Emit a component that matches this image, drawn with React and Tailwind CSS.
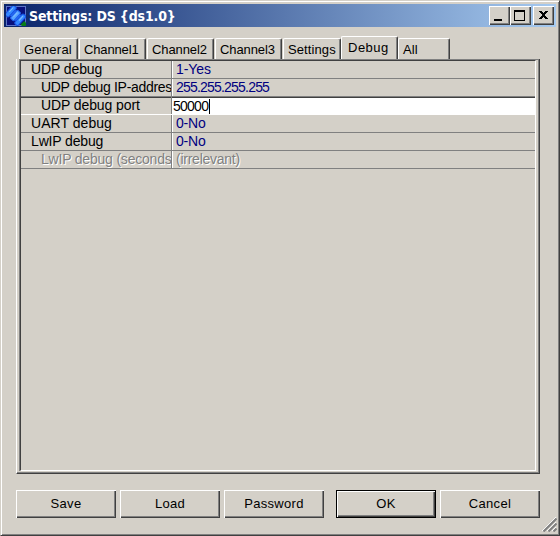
const tabs = [
  { label: "General", cls: "w-[59px] mr-px", ls: "tracking-[0.25px]" },
  { label: "Channel1", cls: "w-[67px] mr-px", ls: "tracking-[-0.15px]" },
  { label: "Channel2", cls: "w-[67px] mr-px", ls: "tracking-[-0.1px]" },
  { label: "Channel3", cls: "w-[67px] mr-px", ls: "tracking-[-0.1px]" },
  { label: "Settings", cls: "w-[58px]", ls: "tracking-[0.1px]" },
  { label: "Debug", cls: "w-[57px]", ls: "tracking-[0.5px]", active: true },
  { label: "All", cls: "w-[52px]", ls: "tracking-[0.1px]" },
];

const rows = [
  { name: "UDP debug", value: "1-Yes", nameLs: "tracking-[-0.1px]", valueLs: "tracking-[-0.1px]" },
  { name: "UDP debug IP-address", value: "255.255.255.255", child: true, nameLs: "tracking-[-0.3px]", valueLs: "tracking-[-0.8px]" },
  { name: "UDP debug port", value: "50000", child: true, editing: true, nameLs: "tracking-[-0.1px]" },
  { name: "UART debug", value: "0-No", nameLs: "tracking-[0.05px]", valueLs: "tracking-[-0.2px]" },
  { name: "LwIP debug", value: "0-No", nameLs: "tracking-[-0.15px]", valueLs: "tracking-[-0.2px]" },
  { name: "LwIP debug (seconds)", value: "(irrelevant)", child: true, disabled: true, nameLs: "tracking-[-0.2px]", valueLs: "tracking-[-0.25px]" },
];

function Tab({ label, cls, ls, active }) {
  return (
    <div
      className={`${cls} ${active ? "h-[23px] pt-[3px] pl-[6px]" : "h-[21px] pt-[3px] pl-[4px]"} ${ls} shrink-0 rounded-t-[2px] border-t border-l border-white border-r border-r-[#404040] shadow-[inset_-1px_0_0_#808080] text-[13px] leading-[15px] whitespace-nowrap`}
    >
      {label}
    </div>
  );
}

function Row({ name, value, child, editing, disabled, nameLs, valueLs }) {
  const line = editing ? "border-white shadow-[inset_0_1px_0_#404040]" : "border-[#808080]";
  const color = disabled
    ? "text-[#808080] [text-shadow:1px_1px_0_#fff]"
    : "text-black";
  return (
    <div
      className={`flex h-[18px] border-b ${line} text-[14px] leading-[16px] whitespace-nowrap`}
    >
      <div
        className={`w-[151px] shrink-0 overflow-hidden border-r border-[#808080] ${child ? "pl-5" : "pl-[10px]"} ${color} ${nameLs}`}
      >
        {name}
      </div>
      {editing ? (
        <div className="mt-px flex flex-1 items-center bg-white pl-px tracking-[-0.75px]">
          {value}
          <span className="ml-[1px] h-[15px] w-px bg-black" />
        </div>
      ) : (
        <div
          className={`flex-1 border-l border-white pl-[3px] ${disabled ? color : "text-[#000080]"} ${valueLs}`}
        >
          {value}
        </div>
      )}
    </div>
  );
}

function Button({ label, primary, className = "" }) {
  const edge = primary
    ? "border border-black pb-px shadow-[inset_1px_1px_0_#fff,inset_-1px_-1px_0_#404040,inset_-2px_-2px_0_#808080]"
    : "pb-[2px] shadow-[inset_1px_1px_0_#fff,inset_-1px_-1px_0_#404040,inset_-2px_-2px_0_#808080]";
  return (
    <button
      className={`${edge} ${className} flex h-7 w-[100px] items-center justify-center text-[13px] leading-[15px] tracking-[0.3px]`}
    >
      {label}
    </button>
  );
}

function CaptionButton({ children, className = "" }) {
  return (
    <button
      className={`${className} h-[19px] w-[21px] bg-[#d4d0c8] shadow-[inset_1px_1px_0_#fff,inset_-1px_-1px_0_#404040,inset_-2px_-2px_0_#808080]`}
    >
      <svg width="21" height="19" viewBox="0 0 21 19" shapeRendering="crispEdges">
        {children}
      </svg>
    </button>
  );
}

function AppIcon() {
  return (
    <svg width="20" height="20" viewBox="0 0 20 20" className="ml-[2px]">
      <rect width="20" height="20" fill="#5c74c8" />
      <rect x="1" y="1" width="18" height="18" fill="#08107c" />
      <g transform="rotate(42 9.5 9.5)">
        <rect x="5" y="5.5" width="9" height="8" fill="#2c70f0" />
        <rect x="0.8" y="3" width="4.6" height="13" rx="1.5" fill="#3488ff" stroke="#1450e4" />
        <rect x="7.2" y="4" width="4.6" height="11" rx="1" fill="#58a4ff" stroke="#1c5cec" />
        <rect x="13.6" y="3" width="4.6" height="13" rx="1.5" fill="#3488ff" stroke="#1450e4" />
        <path d="M2.5 5v6M9 6v6M15.5 5v6" stroke="#80c0ff" />
      </g>
      <path d="M14.5 18.5L18.5 15l1.5 2v3h-4z" fill="#087c18" />
    </svg>
  );
}

export default function App() {
  return (
    <div className="relative flex h-[536px] w-[560px] flex-col overflow-hidden border border-[#d4d0c8] border-r-[#404040] border-b-[#404040] bg-[#d4d0c8] p-[3px] font-['Liberation_Sans',Arial,sans-serif] text-black shadow-[inset_1px_1px_0_#fff,inset_-1px_-1px_0_#808080]">
      <header className="flex h-[23px] shrink-0 items-center bg-linear-to-r/srgb from-[#0a246a] to-[#a6caf0] pr-[2px]">
        <AppIcon />
        <h1 className="ml-[3px] flex-1 font-['DejaVu_Sans_Condensed','DejaVu_Sans',sans-serif] text-[14px] leading-[18px] font-bold tracking-[-0.15px] text-white">
          Settings: DS {"{ds1.0}"}
        </h1>
        <CaptionButton>
          <rect x="5" y="13" width="8" height="2" />
        </CaptionButton>
        <CaptionButton>
          <path d="M4 4h11v11H4zM5 6v8h9V6z" fillRule="evenodd" />
        </CaptionButton>
        <CaptionButton className="ml-[2px]">
          <path d="M6 5h3v1h-3zM12 5h3v1h-3zM7 6h3v1h-3zM11 6h3v1h-3zM8 7h5v1h-5zM9 8h3v2h-3zM8 10h5v1h-5zM7 11h3v1h-3zM11 11h3v1h-3zM6 12h3v1h-3zM12 12h3v1h-3z" />
        </CaptionButton>
      </header>

      <nav className="mt-[9px] flex h-[23px] shrink-0 items-end pl-[15px]">
        {tabs.map((t) => (
          <Tab key={t.label} {...t} />
        ))}
      </nav>

      <main className="ml-3 flex h-[415px] w-[524px] shrink-0 border-r border-b border-l border-[#404040] border-l-white pr-px pb-[2px] pl-[2px] shadow-[inset_-1px_-1px_0_#808080]">
        <section className="flex-1 border-t border-l border-[#808080]">
          <div className="h-full w-[516px] border border-[#404040] border-r-white border-b-white">
            {rows.map((r) => (
              <Row key={r.name} {...r} />
            ))}
          </div>
        </section>
      </main>

      <footer className="mt-4 ml-3 flex gap-1">
        <Button label="Save" />
        <Button label="Load" />
        <Button label="Password" />
        <Button label="OK" primary className="ml-2" />
        <Button label="Cancel" />
      </footer>

      <svg className="absolute right-[2px] bottom-[3px]" width="16" height="16" viewBox="0 0 16 16">
        <path d="M1 15L15 1M6 15L15 6M11 15l4-4" stroke="#fff" />
        <path d="M2.5 15.5l13-13M7.5 15.5l8-8M12.5 15.5l3-3" stroke="#808080" strokeWidth="2" />
      </svg>
    </div>
  );
}
